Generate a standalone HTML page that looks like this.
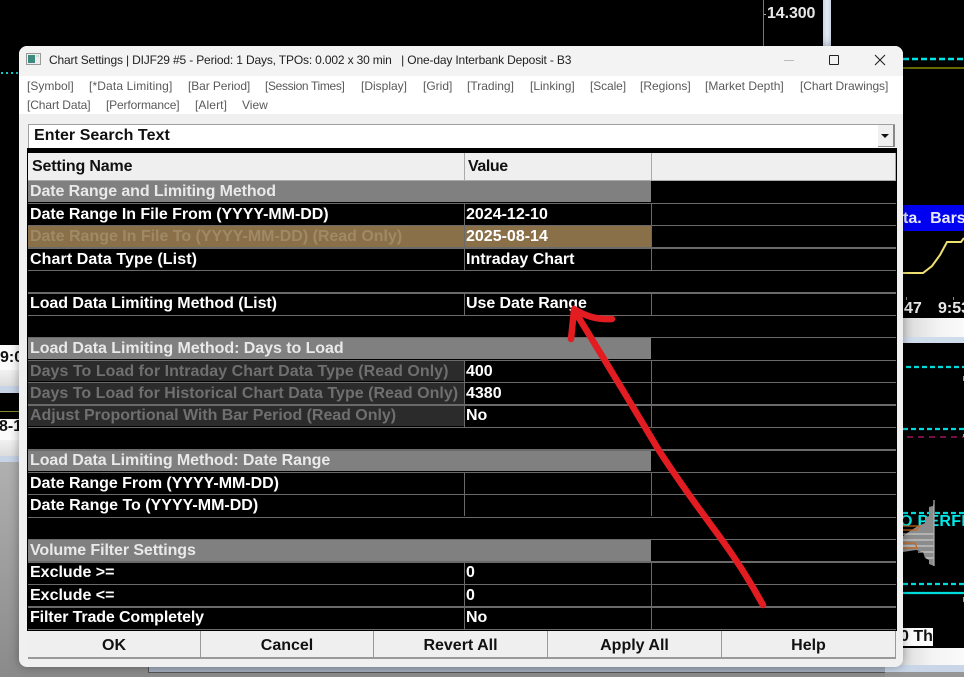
<!DOCTYPE html>
<html><head><meta charset="utf-8"><style>
html,body{margin:0;padding:0}
body{width:964px;height:677px;position:relative;overflow:hidden;background:#000;font-family:"Liberation Sans",sans-serif}
div,span{position:absolute;white-space:nowrap}
.b{font-weight:bold;font-size:16px;line-height:22px}
.m{font-size:12px;line-height:16px;color:#5a5a5a;top:78px}
.m2{top:97px}
.l{left:28px;width:868px;height:1.4px;background:#6a6a6a}
.t{left:30px;color:#fff}
.v{left:466px;color:#fff}
.s{left:28px;width:623px;height:21.4px;background:#808080}
.s2{left:30px;color:#e9e9e9}
.c1{left:464px;width:1.4px;height:22.4px;background:#6a6a6a}
.c2{left:651px;width:1.4px;height:22.4px;background:#6a6a6a}
.g{left:28px;width:436px;height:21px;background:#2b2b2b}
.gt{left:30px;color:#6f6f6f}
.btn{top:631px;height:26px;line-height:29px;background:#efefef;color:#111;text-align:center;font-weight:bold;font-size:16px;border-right:1.5px solid #9a9a9a;border-bottom:2px solid #999}
</style></head><body>

<!-- background: left -->
<div style="left:0;top:345px;width:25px;height:25px;background:#fbfbfb"></div>
<div style="left:0;top:370px;width:25px;height:16px;background:linear-gradient(#f2f2f2,#dcdcdc)"></div>
<div style="left:0;top:386px;width:25px;height:7px;background:#c6d4e6"></div>
<div style="left:0;top:411px;width:25px;height:1px;background:#8a8a30"></div>
<div style="left:0;top:419px;width:25px;height:21px;background:#fbfbfb"></div>
<div style="left:0;top:440px;width:25px;height:16px;background:linear-gradient(#f2f2f2,#dcdcdc)"></div>
<div style="left:0;top:456px;width:25px;height:6px;background:#c6d4e6"></div>
<div style="left:0;top:462px;width:150px;height:215px;background:linear-gradient(#b0b0b0,#8a8a8a)"></div>
<div style="left:150px;top:667px;width:814px;height:10px;background:#8c8c8c"></div>
<div style="left:148px;top:666px;width:816px;height:6px;background:#a3adbd;border-left:1px solid #555;border-bottom:1px solid #555"></div>
<div class="b" style="left:0;top:347px;color:#111">9:0</div>
<div class="b" style="left:-1px;top:416px;color:#111">8-1</div>

<!-- background: top -->
<div style="left:763px;top:0;width:1px;height:46px;background:#777"></div>
<div style="left:764px;top:14px;width:2px;height:1px;background:#aaa"></div>
<div class="b" style="left:767px;top:3px;color:#e8e8e8;letter-spacing:-.1px">14.300</div>
<div style="left:823px;top:0;width:8px;height:46px;background:linear-gradient(90deg,#c8d4e6,#e4eaf3,#c8d4e6)"></div>

<!-- background: right / left chart lines (svg) -->
<svg style="position:absolute;left:0;top:0" width="964" height="677" viewBox="0 0 964 677">
  <line x1="1" y1="73" x2="19" y2="73" stroke="#18c8c8" stroke-width="2" stroke-dasharray="2 3"/>
  <line x1="903" y1="59" x2="964" y2="59" stroke="#00e5e5" stroke-width="2.4" stroke-dasharray="6 3"/>
  <line x1="903" y1="68" x2="964" y2="68" stroke="#8a8a00" stroke-width="1.4"/>
  <polyline points="903,273 923,273 932,266 940,255 947,242 961,242 964,238" fill="none" stroke="#eee070" stroke-width="2"/>
  <line x1="906" y1="367" x2="964" y2="367" stroke="#00dcdc" stroke-width="2.2" stroke-dasharray="5 3"/>
  <line x1="903" y1="429" x2="964" y2="429" stroke="#00dcdc" stroke-width="2.2" stroke-dasharray="5 3"/>
  <line x1="907" y1="437" x2="964" y2="437" stroke="#7a0f48" stroke-width="2" stroke-dasharray="6 5"/>
  <line x1="903" y1="513" x2="964" y2="513" stroke="#00dcdc" stroke-width="2.2" stroke-dasharray="5 3"/>
  <line x1="903" y1="584" x2="964" y2="584" stroke="#00dcdc" stroke-width="2.2" stroke-dasharray="5 3"/>
  <line x1="903" y1="593" x2="964" y2="593" stroke="#00dcdc" stroke-width="2.2"/>
  <line x1="963.5" y1="376" x2="963.5" y2="381" stroke="#00dcdc" stroke-width="1"/>
  <line x1="963.5" y1="434" x2="963.5" y2="437" stroke="#00dcdc" stroke-width="1"/>
  <line x1="963.5" y1="597" x2="963.5" y2="602" stroke="#00dcdc" stroke-width="1"/>
</svg>
<div style="left:903px;top:205px;width:61px;height:26px;background:#0000f0"></div>
<div class="b" style="left:903px;top:208px;color:#e8e8ff;word-spacing:4px">ta. Bars</div>
<div style="left:906px;top:297px;width:1px;height:3px;background:#888"></div>
<div style="left:953px;top:297px;width:1px;height:3px;background:#888"></div>
<div class="b" style="left:904px;top:298px;color:#e8e8e8">47</div>
<div class="b" style="left:938px;top:298px;color:#e8e8e8">9:53</div>
<div style="left:903px;top:318px;width:61px;height:19px;background:linear-gradient(90deg,#d8d8d8,#f4f4f4 60%,#fafafa)"></div>
<div style="left:903px;top:337px;width:61px;height:6px;background:#cfdcec"></div>
<div class="b" style="left:900px;top:511px;color:#00e8e8;letter-spacing:.3px">O PERFE</div>
<svg style="position:absolute;left:903px;top:498px" width="34" height="70" viewBox="903 498 34 70">
  <polygon points="934,500 933,506 929,507 929,516 925,518 925,523 918,526 910,531 903,536 903,552 916,550 923,552 925,558 929,560 929,564 934,566" fill="#8c8c8c"/>
  <g stroke="#d8d8d8" stroke-width="1">
    <line x1="903" y1="534" x2="934" y2="534"/><line x1="903" y1="540" x2="934" y2="540"/><line x1="903" y1="546" x2="934" y2="546"/><line x1="918" y1="552" x2="934" y2="552"/><line x1="926" y1="558" x2="934" y2="558"/>
  </g>
  <line x1="934" y1="500" x2="934" y2="566" stroke="#b0b0b0" stroke-width="1.2"/>
  <polyline points="903,526 920,526 916,530 903,530" fill="none" stroke="#c8641e" stroke-width="1.2"/>
  <polyline points="903,543 915,543 917,548 903,548" fill="none" stroke="#c8641e" stroke-width="1.2"/>
</svg>
<div style="left:903px;top:628px;width:30px;height:18px;background:#fbfbfb"></div>
<div class="b" style="left:900px;top:626px;color:#111;">0 Th</div>
<div style="left:885px;top:648px;width:79px;height:17px;background:linear-gradient(90deg,#d0d0d0,#f4f4f4 60%,#fafafa)"></div>
<div style="left:885px;top:665px;width:79px;height:7px;background:#c8d6e8"></div>
<div style="left:885px;top:672px;width:79px;height:5px;background:#969696"></div>

<!-- window -->
<div style="left:19px;top:46px;width:884px;height:621px;background:#f0f0f0;border-radius:8px;overflow:hidden;box-shadow:0 0 10px rgba(0,0,0,.35)">
  <div style="left:0;top:0;width:884px;height:30px;background:#f3f3f3"></div>
  <div style="left:0;top:30px;width:884px;height:38px;background:#fff"></div>
</div>

<!-- title bar -->
<svg style="position:absolute;left:26px;top:53px" width="17" height="14" viewBox="0 0 17 14">
  <rect x=".5" y=".5" width="14" height="11" fill="#eee" stroke="#999"/>
  <rect x="2" y="2" width="7" height="8" fill="#3d8a80"/>
  <rect x="10" y="2" width="3" height="2" fill="#cfe0d8"/>
</svg>
<div style="left:49px;top:52px;font-size:12px;letter-spacing:-.16px;line-height:16px;color:#222">Chart Settings | DIJF29 #5 - Period: 1 Days, TPOs: 0.002 x 30 min &nbsp; | One-day Interbank Deposit - B3</div>
<div style="left:784px;top:60px;width:10px;height:1px;background:#bbb"></div>
<div style="left:829px;top:55px;width:8px;height:8px;border:1.3px solid #222;border-radius:1px"></div>
<svg style="position:absolute;left:874px;top:54px" width="12" height="12" viewBox="0 0 12 12"><path d="M1 1L11 11M11 1L1 11" stroke="#222" stroke-width="1.1" fill="none"/></svg>

<!-- menu -->
<div class="m" style="left:27px">[Symbol]</div>
<div class="m" style="left:89px;letter-spacing:.13px">[*Data Limiting]</div>
<div class="m" style="left:188px;letter-spacing:-.1px">[Bar Period]</div>
<div class="m" style="left:265px;letter-spacing:-.35px">[Session Times]</div>
<div class="m" style="left:361px">[Display]</div>
<div class="m" style="left:423px">[Grid]</div>
<div class="m" style="left:467px">[Trading]</div>
<div class="m" style="left:530px">[Linking]</div>
<div class="m" style="left:590px;letter-spacing:-.1px">[Scale]</div>
<div class="m" style="left:640px">[Regions]</div>
<div class="m" style="left:705px">[Market Depth]</div>
<div class="m" style="left:800px;letter-spacing:-.07px">[Chart Drawings]</div>
<div class="m m2" style="left:27px;letter-spacing:-.1px">[Chart Data]</div>
<div class="m m2" style="left:106px;letter-spacing:-.15px">[Performance]</div>
<div class="m m2" style="left:195px;letter-spacing:.1px">[Alert]</div>
<div class="m m2" style="left:242px">View</div>

<!-- search -->
<div style="left:28px;top:124px;width:867px;height:24px;background:#fff;border-top:1.5px solid #a0a0a0;border-left:1.5px solid #a0a0a0;box-sizing:border-box"></div>
<div style="left:878px;top:125px;width:15px;height:21px;background:#efefef;border-right:2px solid #888;border-bottom:1px solid #888"></div>
<div style="left:881px;top:134px;width:0;height:0;border-left:4px solid transparent;border-right:4px solid transparent;border-top:4px solid #111"></div>
<div class="b" style="left:34px;top:125px;color:#111;letter-spacing:.06px">Enter Search Text</div>

<!-- grid -->
<div style="left:27px;top:148px;width:870px;height:483px;background:#000"></div>
<div style="left:28px;top:153px;width:868px;height:27px;background:#efefef"></div>
<div style="left:28px;top:180px;width:868px;height:1px;background:#aaa"></div>
<div style="left:464px;top:153px;width:1.4px;height:28px;background:#aaa"></div>
<div style="left:651px;top:153px;width:1.4px;height:28px;background:#aaa"></div>
<div style="left:895px;top:153px;width:1.4px;height:28px;background:#aaa"></div>
<div class="b" style="left:32px;top:156px;color:#111;letter-spacing:-.16px">Setting Name</div>
<div class="b" style="left:468px;top:156px;color:#111;letter-spacing:-.4px">Value</div>

<!-- fills -->
<div class="s" style="top:181px"></div>
<div class="s" style="top:337.6px"></div>
<div class="s" style="top:449.7px"></div>
<div class="s" style="top:539.4px"></div>
<div style="left:28px;top:225.6px;width:623px;height:21.6px;background:#8a7048"></div>
<div class="g" style="top:360px"></div>
<div class="g" style="top:382.5px"></div>
<div class="g" style="top:404.9px"></div>

<!-- row lines -->
<div class="l" style="top:202.6px"></div><div class="l" style="top:225px"></div><div class="l" style="top:247.4px"></div><div class="l" style="top:269.9px"></div><div class="l" style="top:292.3px"></div><div class="l" style="top:314.7px"></div><div class="l" style="top:337.1px"></div><div class="l" style="top:359.5px"></div><div class="l" style="top:382px"></div><div class="l" style="top:404.4px"></div><div class="l" style="top:426.8px"></div><div class="l" style="top:449.2px"></div><div class="l" style="top:471.6px"></div><div class="l" style="top:494.1px"></div><div class="l" style="top:516.5px"></div><div class="l" style="top:538.9px"></div><div class="l" style="top:561.3px"></div><div class="l" style="top:583.7px"></div><div class="l" style="top:606.2px"></div><div class="l" style="top:628.6px"></div>

<!-- column lines -->
<div class="c1" style="top:203px"></div><div class="c2" style="top:203px"></div>
<div class="c1" style="top:225px"></div><div class="c2" style="top:225px"></div>
<div class="c1" style="top:247.4px"></div><div class="c2" style="top:247.4px"></div>
<div class="c1" style="top:292.3px"></div><div class="c2" style="top:292.3px"></div>
<div class="c1" style="top:359.5px"></div><div class="c2" style="top:359.5px"></div>
<div class="c1" style="top:382px"></div><div class="c2" style="top:382px"></div>
<div class="c1" style="top:404.4px"></div><div class="c2" style="top:404.4px"></div>
<div class="c1" style="top:471.6px"></div><div class="c2" style="top:471.6px"></div>
<div class="c1" style="top:494.1px"></div><div class="c2" style="top:494.1px"></div>
<div class="c1" style="top:561.3px"></div><div class="c2" style="top:561.3px"></div>
<div class="c1" style="top:583.7px"></div><div class="c2" style="top:583.7px"></div>
<div class="c1" style="top:606.2px"></div><div class="c2" style="top:606.2px"></div>

<!-- text -->
<div class="b s2" style="top:181px;letter-spacing:-.1px">Date Range and Limiting Method</div>
<div class="b t" style="top:204px;letter-spacing:-.055px">Date Range In File From (YYYY-MM-DD)</div><div class="b v" style="top:204px">2024-12-10</div>
<div class="b" style="left:30px;top:226px;color:#a08a66;letter-spacing:-.02px">Date Range In File To (YYYY-MM-DD) (Read Only)</div><div class="b v" style="top:226px">2025-08-14</div>
<div class="b t" style="top:249px;letter-spacing:.09px">Chart Data Type (List)</div><div class="b v" style="top:249px">Intraday Chart</div>
<div class="b t" style="top:293px;letter-spacing:-.06px">Load Data Limiting Method (List)</div><div class="b v" style="top:293px;letter-spacing:-.07px">Use Date Range</div>
<div class="b s2" style="top:338px;letter-spacing:-.05px">Load Data Limiting Method: Days to Load</div>
<div class="b gt" style="top:361px;letter-spacing:.04px">Days To Load for Intraday Chart Data Type (Read Only)</div><div class="b v" style="top:361px">400</div>
<div class="b gt" style="top:383px;letter-spacing:.02px">Days To Load for Historical Chart Data Type (Read Only)</div><div class="b v" style="top:383px">4380</div>
<div class="b gt" style="top:405px;letter-spacing:-.04px">Adjust Proportional With Bar Period (Read Only)</div><div class="b v" style="top:405px">No</div>
<div class="b s2" style="top:450px;letter-spacing:-.08px">Load Data Limiting Method: Date Range</div>
<div class="b t" style="top:473px;letter-spacing:-.03px">Date Range From (YYYY-MM-DD)</div>
<div class="b t" style="top:495px">Date Range To (YYYY-MM-DD)</div>
<div class="b s2" style="top:540px;letter-spacing:-.09px">Volume Filter Settings</div>
<div class="b t" style="top:562px">Exclude &gt;=</div><div class="b v" style="top:562px">0</div>
<div class="b t" style="top:585px">Exclude &lt;=</div><div class="b v" style="top:585px">0</div>
<div class="b t" style="top:607px;letter-spacing:-.13px">Filter Trade Completely</div><div class="b v" style="top:607px">No</div>

<!-- buttons -->
<div class="btn" style="left:28px;width:172px">OK</div>
<div class="btn" style="left:201px;width:172px">Cancel</div>
<div class="btn" style="left:374px;width:173px">Revert All</div>
<div class="btn" style="left:548px;width:173px">Apply All</div>
<div class="btn" style="left:722px;width:173px">Help</div>

<!-- arrow -->
<svg style="position:absolute;left:0;top:0" width="964" height="677" viewBox="0 0 964 677">
  <path d="M763 605C752 585 738 562 722 540C700 510 680 483 658 449C645 427 600 352 574 310M574 310C573 320 572 330 571 339M574 309C585 316 598 320 612 319" fill="none" stroke="#e31c22" stroke-width="6.5" stroke-linecap="round" stroke-linejoin="round"/>
</svg>
</body></html>
